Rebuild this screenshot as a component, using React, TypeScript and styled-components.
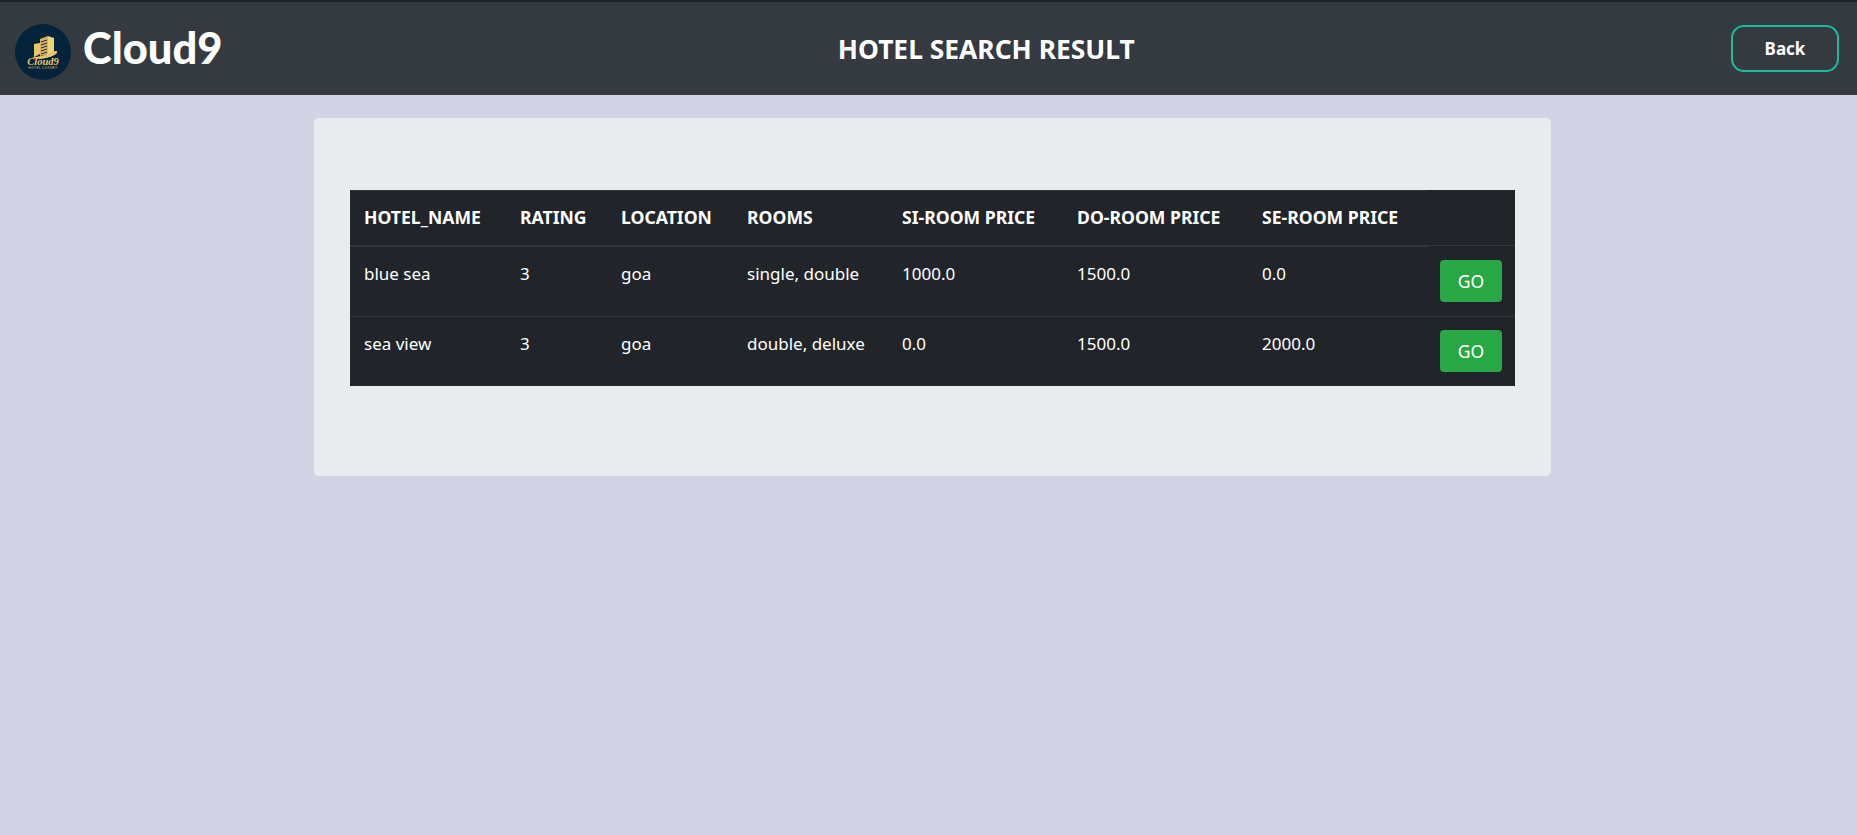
import React from "react";
import styled, { createGlobalStyle } from "styled-components";

const Global = createGlobalStyle`
  html, body { margin: 0; padding: 0; background: #d4d3e6; }
  body { font-family: "Noto Sans", "Open Sans", sans-serif; color: #fff; }
  #root { min-height: 835px; }
`;

const Navbar = styled.header`
  box-sizing: border-box;
  height: 95px;
  background: #343a40;
  border-top: 2px solid #1d242b;
  display: flex;
  align-items: center;
  justify-content: space-between;
  padding: 0 18px 0 15px;
`;
const Brand = styled.div`
  display: flex;
  align-items: center;
  gap: 12px;
`;
const LogoMark = styled.svg`
  display: block;
  width: 56px;
  height: 56px;
  margin-top: 7px;
`;
const Wordmark = styled.span`
  font-family: "Lato", sans-serif;
  font-weight: 900;
  font-size: 43.5px;
  line-height: 48px;
  margin-bottom: 3px;
  color: #fff;
`;
const Title = styled.h1`
  margin: 0 0 0 19px;
  font-size: 26.4px;
  font-weight: 700;
  color: #fff;
`;
const BackButton = styled.button`
  box-sizing: border-box;
  width: 108px;
  height: 47px;
  background: transparent;
  border: 2px solid #1abc9c;
  border-radius: 13px;
  color: #fff;
  font: 700 17px "Noto Sans", sans-serif;
`;
const Main = styled.main`
  padding: 23px 0 0 314px;
`;
const Card = styled.section`
  box-sizing: border-box;
  width: 1237px;
  height: 358px;
  background: #e9ecef;
  border-radius: 5px;
  padding: 72px 36px 0;
`;
const Table = styled.table`
  width: 1165px;
  table-layout: fixed;
  border-collapse: collapse;
  background: #212529;
  color: #fff;
  font-size: 17px;
  line-height: 24px;
`;
const Th = styled.th`
  box-sizing: border-box;
  height: 55px;
  padding: 0 14px 2px;
  text-align: left;
  font-size: 17.6px;
  font-weight: 700;
  white-space: nowrap;
  border-top: 1px solid #32383e;
  border-bottom: 2px solid #32383e;
`;
const Td = styled.td`
  box-sizing: border-box;
  height: 71px;
  padding: 15px 14px 0;
  vertical-align: top;
  border-top: 1px solid #32383e;
  white-space: nowrap;
  tr:last-child > & {
    height: 69px;
  }
`;
const GoCell = styled(Td)`
  padding: 14px 13px 0;
  tr:last-child > & {
    padding-top: 13px;
  }
`;
const GoButton = styled.button`
  display: block;
  box-sizing: border-box;
  width: 62px;
  height: 42px;
  background: #28a745;
  border: 0;
  border-radius: 4px;
  color: #fff;
  font: 400 17.5px "Noto Sans", sans-serif;
`;

const widths = [156, 101, 126, 155, 175, 185, 179, 88];
const headers = ["HOTEL_NAME", "RATING", "LOCATION", "ROOMS", "SI-ROOM PRICE", "DO-ROOM PRICE", "SE-ROOM PRICE"];
const rows = [
  ["blue sea", "3", "goa", "single, double", "1000.0", "1500.0", "0.0"],
  ["sea view", "3", "goa", "double, deluxe", "0.0", "1500.0", "2000.0"],
];

const Logo = () => (
  <LogoMark viewBox="0 0 56 56" aria-hidden="true">
    <circle cx="28" cy="28" r="28" fill="#03233b" />
    <path d="M19 20l6-1v11l-6 3z" fill="#e8c56a" />
    <path d="M25 15l8-3v18l-8 2z" fill="#d9b45c" />
    <path d="M33 12l6 2v17l-6 1z" fill="#f0d27a" />
    <path d="M26 18l6-2M26 21l6-2M26 24l6-2M26 27l6-2M26 30l6-2" stroke="#03233b" strokeWidth="0.9" />
    <path d="M17 33c7 0 14-2 20-5 5-2 7-1 4 2-5 4-17 7-24 3z" fill="#e8c56a" />
    <path d="M20 35c6 1 14-1 20-4-2 3-14 7-20 4z" fill="#03233b" />
    <text x="28" y="40.5" textAnchor="middle" fontFamily="Liberation Serif, serif" fontStyle="italic" fontWeight="700" fontSize="10.5" fill="#e8c56a">Cloud9</text>
    <text x="28" y="45" textAnchor="middle" fontFamily="Liberation Sans, sans-serif" fontSize="3" letterSpacing="0.5" fill="#e8c56a">HOTEL LUXURY</text>
  </LogoMark>
);

export default function App() {
  return (
    <>
      <Global />
      <Navbar>
        <Brand>
          <Logo />
          <Wordmark>Cloud9</Wordmark>
        </Brand>
        <Title>HOTEL SEARCH RESULT</Title>
        <BackButton>Back</BackButton>
      </Navbar>
      <Main>
        <Card>
          <Table>
            <colgroup>
              {widths.map((w, i) => (
                <col key={i} style={{ width: w }} />
              ))}
            </colgroup>
            <thead>
              <tr>
                {headers.map((h) => (
                  <Th key={h}>{h}</Th>
                ))}
              </tr>
            </thead>
            <tbody>
              {rows.map((r) => (
                <tr key={r[0]}>
                  {r.map((c, i) => (
                    <Td key={i}>{c}</Td>
                  ))}
                  <GoCell>
                    <GoButton>GO</GoButton>
                  </GoCell>
                </tr>
              ))}
            </tbody>
          </Table>
        </Card>
      </Main>
    </>
  );
}
